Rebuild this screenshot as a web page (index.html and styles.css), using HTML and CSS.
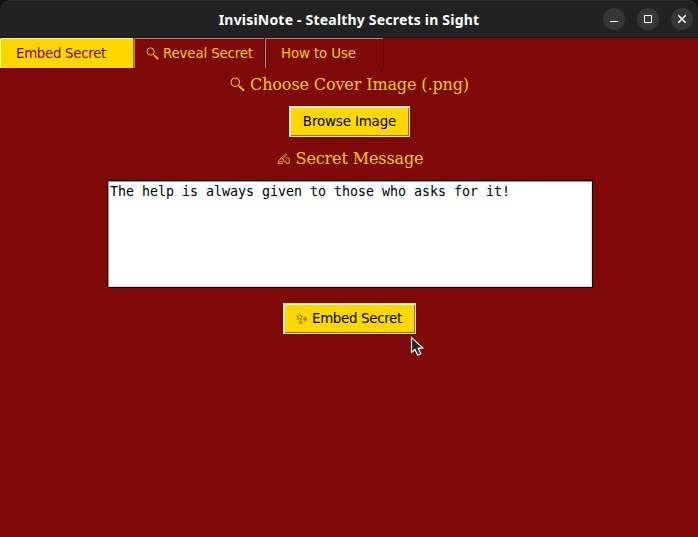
FILE: index.html
```
<!DOCTYPE html>
<html lang="en">
<head>
<meta charset="utf-8">
<title>InvisiNote - Stealthy Secrets in Sight</title>
<link rel="stylesheet" href="styles.css">
</head>
<body>
<svg class="defs" aria-hidden="true">
  <symbol id="lens" viewBox="0 0 15 15">
    <circle cx="5.3" cy="5.2" r="4.2" fill="none" stroke="currentColor" stroke-width="1.1"/>
    <path d="M8.2 8.2 9.6 9.6" stroke="currentColor" stroke-width="1" fill="none"/>
    <path d="M9.6 9.6 13.4 13.3" stroke="currentColor" stroke-width="2" stroke-linecap="round" fill="none"/>
  </symbol>
</svg>
<div class="window">
  <header class="titlebar">
    <h1 class="title">InvisiNote - Stealthy Secrets in Sight</h1>
    <div class="controls">
      <button class="control" aria-label="Minimize"><svg viewBox="0 0 22 22"><path d="M7 13.5h8"/></svg></button>
      <button class="control" aria-label="Maximize"><svg viewBox="0 0 22 22"><path d="M7.5 7.5h7v7h-7z"/></svg></button>
      <button class="control" aria-label="Close"><svg viewBox="0 0 22 22"><path class="cross" d="m7.3 7.3 7.4 7.4m0-7.4-7.4 7.4"/></svg></button>
    </div>
  </header>
  <nav class="tabs">
    <button class="tab tab-embed active">Embed Secret</button>
    <button class="tab tab-reveal"><svg class="tab-lens"><use href="#lens"/></svg>Reveal Secret</button>
    <button class="tab tab-help">How to Use</button>
  </nav>
  <main class="panel">
    <h2 class="label cover-label"><svg class="label-lens" viewBox="0 0 16 16"><use href="#lens" width="15" height="15"/></svg>Choose Cover Image (.png)</h2>
    <button class="button browse">Browse Image</button>
    <h2 class="label message-label">
      <svg class="pen" viewBox="0 0 14 12"><path d="M1 9 3.2 5.8 8.6 1 9.6 1.8 5.2 6.2M3.2 5.8 6.2 6 6.8 7.2 5.2 8.8 3.4 8.6 1 9.6M.6 10.4H6M8.6 5H12.2V10.4H9.2L8.8 8.2 6.4 8.8"/></svg>Secret Message</h2>
    <textarea class="message" spellcheck="false">The help is always given to those who asks for it!</textarea>
    <button class="button embed"><svg class="sparkles" viewBox="0 0 12 12"><path d="M3.5.8 4.5 2.8 6.5 3.4 5 4.6 5.3 6.7 3.5 5.6 1.7 6.7 2 4.6.6 3.4 2.6 2.8zM9 4.1 9.5 5.2 10.8 5.4 9.8 6.2 10 7.4 9 6.8 8 7.4 8.2 6.2 7.2 5.4 8.5 5.2zM4.7 7.8 5.2 8.8 6.3 9 5.5 9.7 5.7 10.8 4.7 10.3 3.7 10.8 3.9 9.7 3.1 9 4.2 8.8z"/></svg>Embed Secret</button>
  </main>
  <svg class="cursor" viewBox="0 0 14 21"><path d="M1.5 1.5v15l3.5-3 2.8 5.7 3-1.4-2.7-5.5 4.7-.4z"/></svg>
</div>
</body>
</html>
```
FILE: styles.css
```
* { box-sizing: border-box; }
body { margin: 0; background: #111; }
button { margin: 0; padding: 0; border: 0; font: inherit; color: inherit; background: none; }
.defs { display: none; }
.window {
  position: relative;
  width: 698px;
  height: 537px;
  overflow: hidden;
  background: #7f0909;
  color: #f8cd00;
  font: 13.33px "DejaVu Sans", sans-serif;
}
.titlebar {
  display: grid;
  grid-template-columns: 1fr auto 1fr;
  align-items: center;
  height: 38px;
  background: #222;
  border-top: 1px solid #303030;
  border-bottom: 1px solid #191919;
  border-radius: 10px 10px 0 0;
  box-shadow: 0 0 0 10px #111;
  clip-path: inset(0);
}
.title {
  grid-column: 2;
  margin: 0;
  color: #fff;
  font: bold 14px/20px "Noto Sans", sans-serif;
  letter-spacing: .2px;
  white-space: nowrap;
  padding-top: 1px;
}
.controls { display: flex; justify-content: flex-end; gap: 12px; padding-right: 5px; }
.control { width: 22px; height: 22px; border-radius: 50%; background: #373737; }
.control svg { display: block; width: 22px; height: 22px; fill: none; stroke: #fff; stroke-width: 1; }
.control .cross { stroke-width: 1.5; }
.tabs { display: flex; height: 30px; }
.tab {
  display: flex;
  align-items: center;
  height: 30px;
  border: solid;
  border-width: 1px 1px 0;
  border-color: #bd8080 #500606 #500606 #bd8080;
  border-radius: 2px 2px 0 0;
  white-space: nowrap;
}
.tab-embed { width: 134px; padding-left: 15px; letter-spacing: -.28px; }
.active { background: #ffd700; color: #7f0909; border-color: #ffff7f #927b00 #927b00 #ffff7f; }
.tab-reveal { width: 131px; padding-left: 11px; letter-spacing: -.13px; }
.tab-help { width: 119px; padding-left: 15px; letter-spacing: -.1px; }
.tab-lens { width: 13px; height: 13px; margin-right: 4px; }
.panel { display: flex; flex-direction: column; align-items: center; padding-top: 7px; }
.label {
  display: flex;
  align-items: center;
  height: 20px;
  margin: 0;
  font: 16px/20px "DejaVu Serif", serif;
  letter-spacing: -.12px;
  white-space: nowrap;
}
.cover-label { padding-left: 1px; }
.label-lens { width: 16px; height: 16px; margin-right: 4px; }
.button {
  display: flex;
  align-items: center;
  justify-content: center;
  height: 31px;
  border: 1px solid #dcdad5;
  background: #ffd700;
  color: #000;
  box-shadow: inset 1px 1px #ffffb0, inset -1px -1px #927b00;
  white-space: nowrap;
}
.browse { width: 121px; margin: 11px 0 12px; padding-left: 1px; letter-spacing: -.1px; }
.message-label { margin-left: 2px; }
.pen { width: 14px; height: 12px; margin-right: 5px; fill: none; stroke: currentColor; stroke-width: .8; }
.message {
  width: 486px;
  height: 108px;
  margin: 11px 0 15px 2px;
  padding: 3px 1px 3px 2px;
  border: 1px solid #000;
  outline: 0;
  resize: none;
  background: #fff;
  color: #000;
  box-shadow: inset 1px 1px #999, inset -1px -1px #ddd;
  font: 13.33px/16px "DejaVu Sans Mono", monospace;
  letter-spacing: -.025px;
}
.embed { width: 133px; letter-spacing: -.28px; }
.sparkles { width: 12px; height: 12px; margin-right: 4px; fill: none; stroke: #655500; stroke-width: .7; }
.cursor { position: absolute; left: 410px; top: 336px; width: 14px; height: 21px; fill: #252525; stroke: #fff; stroke-width: 1.2; }
```
